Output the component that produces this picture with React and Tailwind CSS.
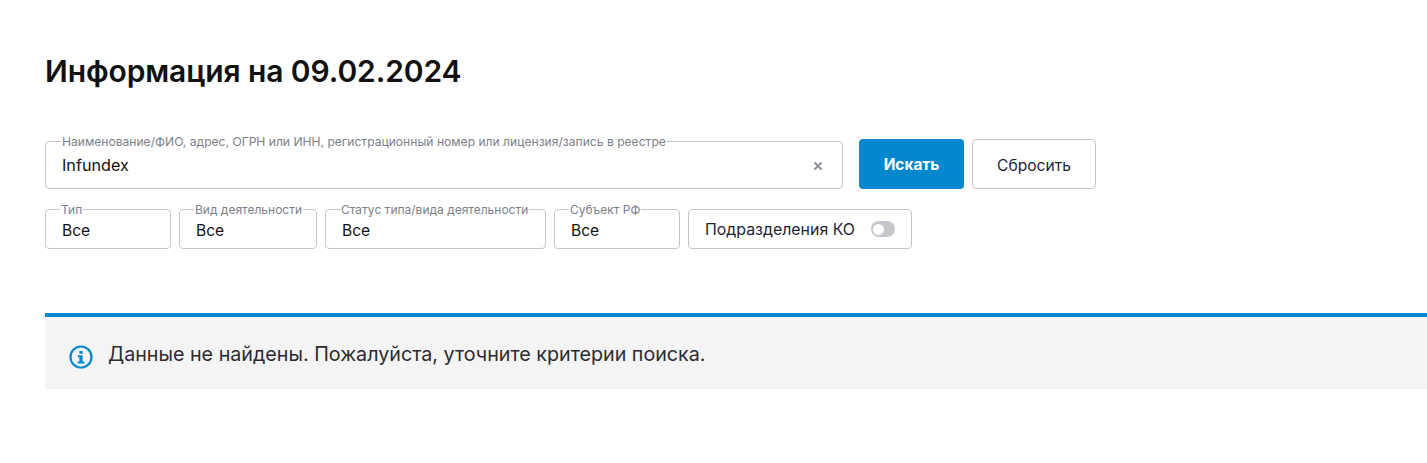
// App.jsx
import { X } from "lucide-react";

const filters = [
  { label: "Тип", width: "w-[126px]" },
  { label: "Вид деятельности", width: "w-[138px]" },
  { label: "Статус типа/вида деятельности", width: "w-[221px]" },
  { label: "Субъект РФ", width: "w-[126px]" },
];

function Field({ label, className, legendClass, children }) {
  return (
    <fieldset className={`border border-[#c4c6cc] rounded-[4px] px-[16px] min-w-0 ${className}`}>
      <legend className={`px-[1px] pt-[1px] leading-[12px] h-[12px] text-[#7b7f8a] whitespace-nowrap ${legendClass}`}>
        {label}
      </legend>
      {children}
    </fieldset>
  );
}

export default function App() {
  return (
    <div className="min-h-[463px] bg-white pl-[45px] pt-[52px] font-['Inter','Noto_Sans',sans-serif] text-[#1b1b1f]">
      <h1 className="text-[30px] tracking-[-0.1px] leading-[38px] font-semibold text-[#111111]">
        Информация на 09.02.2024
      </h1>

      {/* Search row */}
      <div className="flex items-end gap-2 mt-[45px]">
        <Field
          label="Наименование/ФИО, адрес, ОГРН или ИНН, регистрационный номер или лицензия/запись в реестре"
          className="w-[798px] h-[54px] mr-2"
          legendClass="-ml-[1px] text-[12.1px]"
        >
          <div className="flex items-center justify-between h-[36px] text-[16.2px] text-[#111111]">
            <span>Infundex</span>
            <X size={12} strokeWidth={4} className="text-[#8f929b] mr-[2px] mt-[1px]" />
          </div>
        </Field>
        <button className="w-[105px] h-[50px] pt-[2px] rounded-[4px] bg-[#0387cf] text-white text-[15.4px] font-bold">
          Искать
        </button>
        <button className="w-[124px] h-[50px] pt-[3px] rounded-[4px] border border-[#c4c6cc] bg-white text-[15.6px] text-[#1f2433]">
          Сбросить
        </button>
      </div>

      {/* Filters */}
      <div className="flex items-end gap-2 mt-[14px]">
        {filters.map((f) => (
          <Field key={f.label} label={f.label} className={`${f.width} h-[46px]`} legendClass="-ml-[2px] text-[12px]">
            <div className="h-[34px] pt-[4px] text-[15.6px] leading-[24px] text-[#111111]">Все</div>
          </Field>
        ))}
        <div className="flex items-center justify-between w-[224px] h-[40px] px-4 rounded-[4px] border border-[#c4c6cc] text-[15.9px] text-[#1f2433] whitespace-nowrap">
          <span className="pt-[2px]">Подразделения КО</span>
          <span className="flex items-center shrink-0 w-6 h-4 rounded-full bg-[#c4c6cc] px-[2px]">
            <span className="w-[11px] h-[11px] rounded-full bg-white" />
          </span>
        </div>
      </div>

      {/* Empty result */}
      <div className="flex items-center gap-[15px] h-[76px] mt-[64px] pl-[24px] pt-[2px] border-t-4 border-[#0387cf] bg-[#f4f4f4]">
        <svg width="24" height="24" viewBox="0 0 24 24" fill="none" className="mt-[5px]">
          <circle cx="12" cy="12" r="10.5" stroke="#0387cf" strokeWidth="2.2" />
          <rect x="10.4" y="6" width="3.2" height="2.8" fill="#0387cf" />
          <path d="M8.8 10.2h4.8v6.2h1.8v2H8.6v-2h1.8v-4.2H8.8z" fill="#0387cf" />
        </svg>
        <span className="text-[19.7px] leading-[26px] text-[#2b2b30]">
          Данные не найдены. Пожалуйста, уточните критерии поиска.
        </span>
      </div>
    </div>
  );
}
